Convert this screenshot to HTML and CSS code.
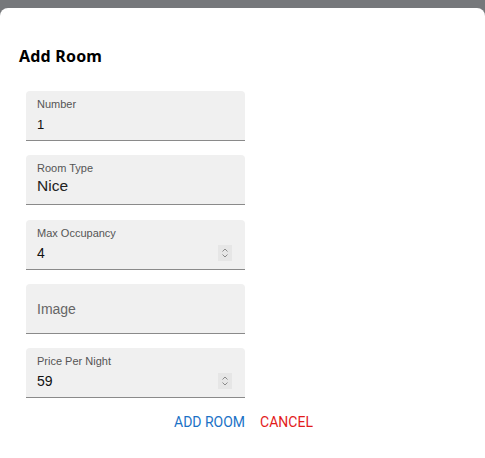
FILE: index.html
```html
<!DOCTYPE html>
<html>
<head>
<meta charset="utf-8">
<link rel="stylesheet" href="styles.css">
</head>
<body>
<div class="backdrop">
  <div class="dialog">
    <h2 class="title">Add Room</h2>
    <div class="fields">
      <div class="field">
        <div class="label">Number</div>
        <div class="value small">1</div>
      </div>
      <div class="field">
        <div class="label">Room Type</div>
        <div class="value big">Nice</div>
      </div>
      <div class="field">
        <div class="label">Max Occupancy</div>
        <div class="row"><div class="value">4</div><span class="spin"><svg width="8" height="12" viewBox="0 0 8 12"><path d="M1.5 4.5 L4 2 L6.5 4.5 M1.5 7.5 L4 10 L6.5 7.5" fill="none" stroke="#8a8a8a" stroke-width="1"/></svg></span></div>
      </div>
      <div class="field empty">
        <div class="placeholder">Image</div>
      </div>
      <div class="field">
        <div class="label">Price Per Night</div>
        <div class="row"><div class="value">59</div><span class="spin"><svg width="8" height="12" viewBox="0 0 8 12"><path d="M1.5 4.5 L4 2 L6.5 4.5 M1.5 7.5 L4 10 L6.5 7.5" fill="none" stroke="#8a8a8a" stroke-width="1"/></svg></span></div>
      </div>
    </div>
    <div class="actions">
      <span class="btn add">ADD ROOM</span>
      <span class="btn cancel">CANCEL</span>
    </div>
  </div>
</div>
</body>
</html>
```
FILE: styles.css
```css
html, body { margin: 0; padding: 0; }
body { background: #76787b; font-family: "Liberation Sans", Arial, sans-serif; width: 485px; height: 458px; overflow: hidden; }
.backdrop { padding-top: 8px; height: 450px; }
.dialog { background: #fff; border-radius: 8px 8px 0 0; height: 450px; padding: 0 0 0 19px; box-sizing: border-box; }
.title { margin: 0; padding-top: 38px; font-family: "Noto Sans", sans-serif; font-weight: 700; font-size: 16px; line-height: 20px; color: #000; letter-spacing: 0.2px; }
.fields { display: flex; flex-direction: column; gap: 14.3px; margin-top: 25px; margin-left: 7px; width: 219px; }
.field { background: #f0f0f0; border-radius: 4px 4px 0 0; border-bottom: 1px solid #8a8a8a; height: 50px; box-sizing: border-box; padding: 7px 11px 0 11px; }
.label { font-size: 11px; line-height: 13px; color: #555; }
.value { font-size: 14px; line-height: 18px; color: #111; margin-top: 4px; }
.value.small { font-size: 13px; margin-top: 5px; }
.value.big { font-size: 15.5px; margin-top: 2px; color: #222; }
.row { display: flex; justify-content: space-between; align-items: center; }
.spin { display: flex; align-items: center; justify-content: center; width: 14px; height: 16px; background: #e6e6e6; margin-top: 4px; margin-right: 2px; }
.field.empty { padding-top: 16px; }
.placeholder { font-size: 14px; line-height: 18px; color: #666; }
.actions { display: flex; gap: 15px; margin-top: 15px; margin-left: 155px; }
.btn { font-family: Roboto, "Liberation Sans", sans-serif; font-size: 14px; line-height: 18px; }
.add { color: #1b72c6; }
.cancel { color: #e31b1b; }
```
